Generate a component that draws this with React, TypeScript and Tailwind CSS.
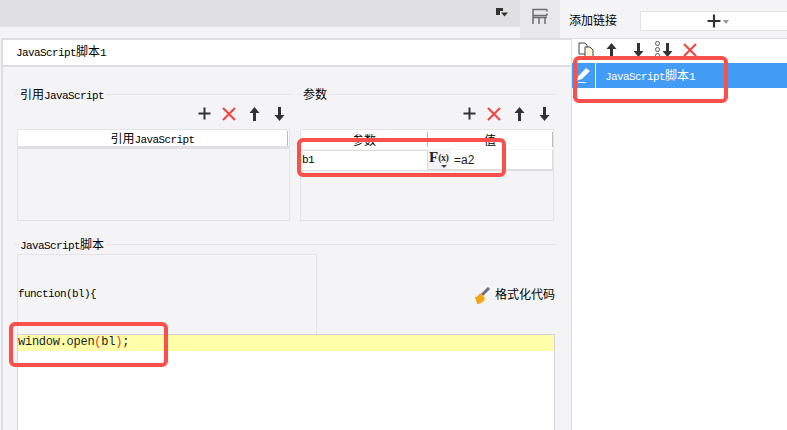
import type { ReactNode } from 'react';

const SIM = '"Liberation Mono", "Noto Sans CJK SC", monospace';

function Lat({ children }: { children: ReactNode }) {
  return <span className="text-[11px] tracking-[-0.6px]">{children}</span>;
}

function Plus({ size = 13 }: { size?: number }) {
  return (
    <svg width={size} height={size} viewBox="0 0 13 13">
      <path d="M6.5 0.5v12M0.5 6.5h12" stroke="#333" strokeWidth="2" fill="none" />
    </svg>
  );
}

function Cross() {
  return (
    <svg width="14" height="14" viewBox="0 0 14 14">
      <path d="M1 1l12 12M13 1L1 13" stroke="#ee4a44" strokeWidth="2.2" fill="none" />
    </svg>
  );
}

function Up() {
  return (
    <svg width="11" height="14" viewBox="0 0 11 14">
      <path d="M5.5 0L10.5 6H7V14H4V6H0.5Z" fill="#333" />
    </svg>
  );
}

function Down() {
  return (
    <svg width="11" height="14" viewBox="0 0 11 14">
      <path d="M5.5 14L10.5 8H7V0H4V8H0.5Z" fill="#333" />
    </svg>
  );
}

function Tools({ className }: { className: string }) {
  return (
    <div className={`flex h-[19px] items-center justify-end gap-[11px] ${className}`}>
      <div className="flex w-[14px] justify-center"><Plus /></div>
      <div className="flex w-[14px] justify-center"><Cross /></div>
      <div className="flex w-[14px] justify-center"><Up /></div>
      <div className="flex w-[14px] justify-center"><Down /></div>
    </div>
  );
}

function GroupTitle({ children }: { children: ReactNode }) {
  return (
    <div className="flex h-[14px] items-center text-[12px] leading-[14px] text-black">
      <div className="mr-px h-px w-[5px] bg-[#e6e6ea]" />
      <span className="translate-y-[2px] whitespace-nowrap">{children}</span>
      <div className="ml-[2px] h-px flex-1 bg-[#e6e6ea]" />
    </div>
  );
}

function Box({ className, children }: { className?: string; children: ReactNode }) {
  return <div className={`border border-[#e4e4e8] ${className ?? ''}`}>{children}</div>;
}

function Annotation({ className }: { className: string }) {
  return <div className={`absolute rounded-[6px] border-[4px] border-[#f9504c] ${className}`} />;
}

export default function App() {
  return (
    <div className="relative flex h-[430px] w-[787px] overflow-hidden bg-[#f4f4f7] text-[12px] text-black" style={{ fontFamily: SIM }}>
      <div className="flex w-[571px] flex-col">
        <div className="flex h-[39px]">
          <div className="flex flex-1 flex-col">
            <div className="flex h-[27px] items-start justify-end bg-[#e0e0e2] pr-[12px] pt-[8px]">
              <svg width="12" height="10" viewBox="0 0 12 10">
                <path d="M0 0h7v3H4v4H0z" fill="#333" />
                <path d="M5 4.5h7l-3.5 4z" fill="#333" />
              </svg>
            </div>
            <div className="flex-1 bg-[#f4f4f7]" />
          </div>
          <div className="flex w-[40px] items-start justify-center bg-[#e8e8ea] pt-[8px]">
            <svg width="16" height="16" viewBox="0 0 16 16">
              <path d="M1 16V1.5h14M1 7.5h14M1 9.5h14M7 9.5V16M13 9.5V16M15 1.5v2M15 5.5v2" stroke="#6d6d70" strokeWidth="1.5" fill="none" />
            </svg>
          </div>
          <div className="w-[11px]" />
        </div>
        <div className="ml-px -mt-px flex flex-1 flex-col border-l-2 border-t-2 border-l-[#dedee2] border-t-[#dedee2]">
          <div className="flex h-[27px] items-center border-b-2 border-[#dddde1] bg-white pl-[13px] leading-[14px]">
            <span><Lat>JavaScript</Lat>脚本<Lat>1</Lat></span>
          </div>
          <div className="flex flex-col pl-[11px] pr-[14px] pt-[20px]">
            <div className="flex gap-[4px]">
              <div className="flex w-[279px] flex-col">
                <GroupTitle>引用<Lat>JavaScript</Lat></GroupTitle>
                <div className="mt-[3px]"><Tools className="pr-[7px]" /></div>
                <Box className="mx-[3px] mt-[6px] h-[92px]">
                  <div className="flex h-[19px] items-center border-b-[3px] border-[#e0e0e4] bg-white leading-[14px]">
                    <span className="flex-1 translate-y-[2px] text-center">引用<Lat>JavaScript</Lat></span>
                    <div className="mr-[1px] h-[15px] w-px bg-[#bdbdb8]" />
                  </div>
                </Box>
              </div>
              <div className="flex flex-1 flex-col">
                <GroupTitle>参数</GroupTitle>
                <div className="mt-[3px]"><Tools className="pr-[6px]" /></div>
                <Box className="mx-[3px] mt-[6px] h-[92px]">
                  <div className="flex h-[19px] items-center bg-white leading-[14px]">
                    <span className="w-[126px] translate-y-[2px] text-center">参数</span>
                    <div className="h-[15px] w-px bg-[#bdbdb8]" />
                    <span className="flex-1 translate-y-[2px] text-center">值</span>
                    <div className="h-[15px] w-px bg-[#bdbdb8]" />
                  </div>
                  <div className="mt-px flex h-[21px] border-b-2 border-[#dcdcdc] bg-[#dcdcdc]">
                    <div className="flex w-[126px] translate-y-px items-center bg-white pl-[1px]"><Lat>b1</Lat></div>
                    <div className="relative ml-px flex w-[22px] items-start bg-[#f4f4f7] pl-[1px] leading-[15px]" style={{ fontFamily: '"Liberation Serif", serif' }}>
                      <span className="text-[15px] font-bold text-[#222]">F</span>
                      <span className="text-[10px] font-bold tracking-[-0.5px] text-[#333]">(x)</span>
                      <div className="absolute bottom-[1px] right-[3px] h-0 w-0 border-x-[3px] border-t-[3px] border-x-transparent border-t-[#444]" />
                    </div>
                    <div className="flex flex-1 items-center bg-white pl-[4px] text-[12px] text-[#222]" style={{ fontFamily: '"Liberation Sans", sans-serif' }}>=a2</div>
                    <div className="w-[1px]" />
                  </div>
                </Box>
              </div>
            </div>
            <div className="mt-[16px] flex flex-col">
              <GroupTitle><Lat>JavaScript</Lat>脚本</GroupTitle>
            </div>
            <div className="ml-[3px] mr-[2px] mt-[3px] flex items-center">
              <Box className="flex h-[80px] w-[300px] items-center border-b-0 pb-[2px] leading-[14px]">
                <Lat>function(bl){'{'}</Lat>
              </Box>
              <div className="ml-auto flex translate-y-[2px] items-center gap-[5px] leading-[14px]">
                <svg width="16" height="18" viewBox="0 0 16 18">
                  <path d="M15 1L8 8" stroke="#6d7078" strokeWidth="3" fill="none" />
                  <path d="M6 6L11 11C10 15 6 17 3 17C3 15 1 12 1 10C3 10 5 8 6 6Z" fill="#f2a516" />
                </svg>
                <span>格式化代码</span>
              </div>
            </div>
            <div className="ml-[3px] mr-[2px] h-[96px] border border-b-0 border-[#d4d4da] bg-white">
              <div className="flex h-[16px] items-start bg-[#ffffaa] text-[12px] leading-[14px] tracking-[-0.26px] text-[#222]">
                window.open<span className="text-[#f03030]">(</span>bl<span className="text-[#f03030]">)</span>;
              </div>
            </div>
          </div>
        </div>
      </div>
      <div className="flex flex-1 flex-col">
        <div className="flex h-[38px] items-start pt-[11px]">
          <span className="-ml-[2px] w-[71px] translate-y-[4px] whitespace-nowrap text-[12px] leading-[14px]">添加链接</span>
          <div className="flex h-[20px] flex-1 items-center gap-[2px] border border-r-0 border-[#e2e2e6] bg-white pl-[66px]">
            <Plus size={14} />
            <div className="mt-[2px] h-0 w-0 border-x-[3px] border-t-[4px] border-x-transparent border-t-[#999]" />
          </div>
        </div>
        <div className="flex flex-1 flex-col border-l border-t border-[#dedee2] bg-white">
          <div className="flex h-[24px] items-center pb-[3px] pl-[6px]">
            <svg width="16" height="16" viewBox="0 0 16 16">
              <path d="M1 1h6l2 2v9H1z" fill="#fff" stroke="#444" />
              <path d="M7 5h5l3 3v7H7z" fill="#fdf4d8" stroke="#444" />
            </svg>
            <div className="ml-[12px]"><Up /></div>
            <div className="ml-[16px]"><Down /></div>
            <div className="ml-[11px] flex items-center gap-[2px]">
              <div className="flex flex-col gap-[1px]">
                <div className="h-[5px] w-[5px] rounded-full border border-[#555]" />
                <div className="h-[5px] w-[5px] rounded-full border border-[#555]" />
                <div className="h-[5px] w-[5px] rounded-full border border-[#555]" />
              </div>
              <Down />
            </div>
            <div className="ml-[10px]"><Cross /></div>
          </div>
          <div className="flex h-[25px] bg-[#429cf6] text-white">
            <div className="flex w-[24px] items-center justify-center border-r border-white">
              <svg width="13" height="15" viewBox="0 0 13 15">
                <path d="M9 0L13 3L5 11L0 12.5L1.5 8Z" fill="#fff" />
                <path d="M1 14.5h8" stroke="#fff" />
              </svg>
            </div>
            <span className="flex translate-y-px items-center pl-[9px] leading-[14px]"><span><Lat>JavaScript</Lat>脚本<Lat>1</Lat></span></span>
          </div>
        </div>
      </div>
      <Annotation className="left-[297px] top-[138px] h-[39px] w-[209px]" />
      <Annotation className="left-[9px] top-[322px] h-[45px] w-[159px]" />
      <Annotation className="left-[573px] top-[56px] h-[47px] w-[155px]" />
    </div>
  );
}
